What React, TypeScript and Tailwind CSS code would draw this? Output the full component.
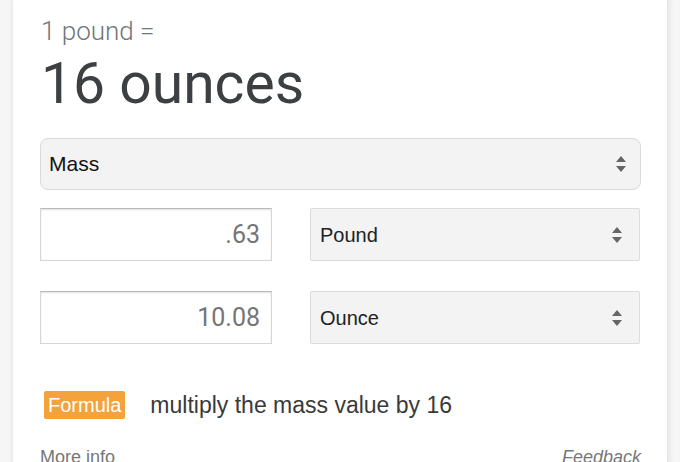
import React from "react";

function Arrows() {
  return (
    <svg width="12" height="20" viewBox="0 0 12 20" className="shrink-0">
      <path d="M6 2 L11 8 H1 Z" fill="#666" />
      <path d="M6 18 L11 12 H1 Z" fill="#666" />
    </svg>
  );
}

function NumInput({ value }: { value: string }) {
  return (
    <div className="w-[232px] h-[53px] border border-[#d6d6d6] border-t-[#b8b8b8] shadow-[inset_0_1px_2px_rgba(0,0,0,0.12)] bg-white flex items-center justify-end pr-[11px] text-[25px] text-[#757575] font-['Roboto',sans-serif]">
      {value}
    </div>
  );
}

function UnitSelect({ label }: { label: string }) {
  return (
    <div className="w-[330px] h-[53px] border border-[#dcdcdc] rounded-[2px] bg-[#f3f3f3] flex items-center justify-between pl-[9px] pr-[16px] text-[20px] text-[#222] font-['Liberation_Sans',sans-serif]">
      <span>{label}</span>
      <Arrows />
    </div>
  );
}

export default function App() {
  return (
    <div className="w-[680px] h-[462px] bg-[#f6f6f6] overflow-hidden font-['Roboto',sans-serif]">
      <div className="ml-[13px] mt-[-8px] w-[654px] h-[480px] bg-white rounded-[8px] shadow-[1px_0_6px_rgba(0,0,0,0.12)] pl-[27px] pr-[26px] pt-[23px]">
        <div className="text-[26px] leading-[32px] font-light text-[#70757a] pl-[1px]">1 pound =</div>
        <div className="text-[57px] leading-[62px] text-[#3c4043] mt-[6px] pl-[1px]">16 ounces</div>
        <div className="mt-[23px] h-[52px] w-[601px] rounded-[8px] border border-[#dadada] bg-[#f3f3f3] flex items-center justify-between pl-[8px] pr-[13px] text-[21px] text-[#111] font-['Liberation_Sans',sans-serif]">
          <span>Mass</span>
          <Arrows />
        </div>
        <div className="mt-[18px] flex gap-[38px]">
          <NumInput value=".63" />
          <UnitSelect label="Pound" />
        </div>
        <div className="mt-[30px] flex gap-[38px]">
          <NumInput value="10.08" />
          <UnitSelect label="Ounce" />
        </div>
        <div className="mt-[44px] flex items-center pl-[4px] font-['Liberation_Sans',sans-serif]">
          <span className="h-[28px] px-[4px] bg-[#f4a23a] rounded-[2px] text-white text-[20px] leading-[28px]">Formula</span>
          <span className="ml-[25px] text-[23px] text-[#3a3a3a]">multiply the mass value by 16</span>
        </div>
        <div className="mt-[21px] flex justify-between w-[601px] text-[18px] text-[#777] font-['Liberation_Sans',sans-serif]">
          <span>More info</span>
          <span className="italic">Feedback</span>
        </div>
      </div>
    </div>
  );
}
